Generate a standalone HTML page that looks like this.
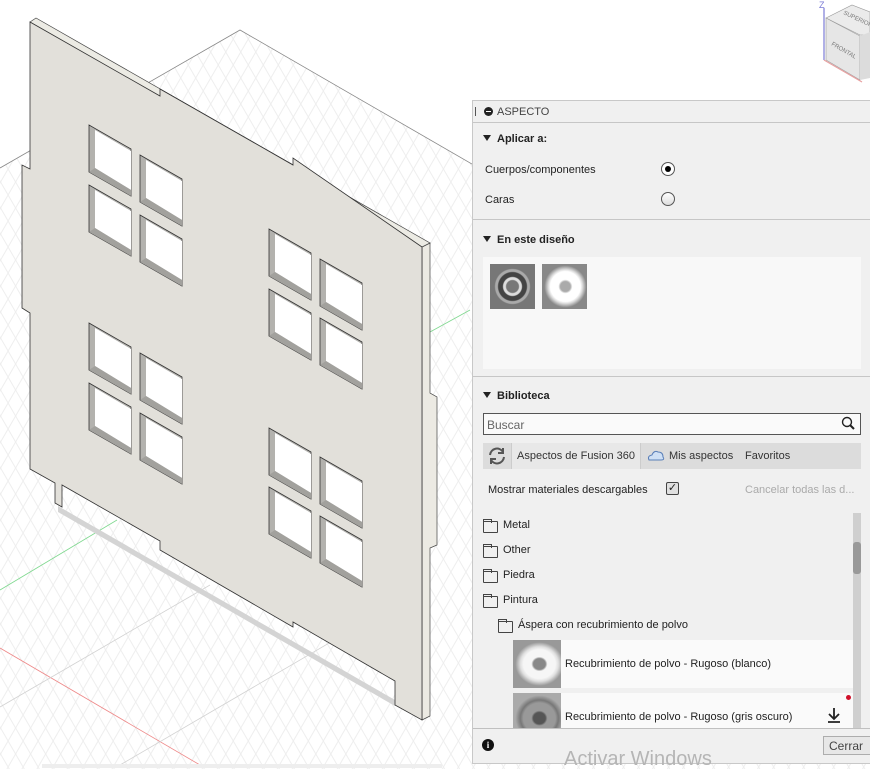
<!DOCTYPE html>
<html><head><meta charset="utf-8"><style>
*{margin:0;padding:0;box-sizing:border-box}
body{width:870px;height:769px;overflow:hidden;background:#fff;position:relative;font-family:"Liberation Sans",Arial,sans-serif;font-size:11px;color:#222}
.a{position:absolute}
#panel{left:472px;top:100px;width:400px;height:664px;background:#f0f0f0;border:1px solid #c8c8c8}
.hr{position:absolute;left:0;right:0;height:1px;background:#c6c6c6}
.tri{display:inline-block;width:0;height:0;border-left:4px solid transparent;border-right:4px solid transparent;border-top:6px solid #222;margin-right:6px;vertical-align:1px}
.b{font-weight:bold;font-size:11px}
.fold{position:absolute;width:15px;height:12px;border:1px solid #444;border-radius:1px}
.fold:before{content:"";position:absolute;left:-1px;top:-3px;width:7px;height:3px;border:1px solid #444;border-bottom:none}
</style></head><body>
<svg class="a" style="left:0;top:0" width="870" height="769">
<defs>
<pattern id="g1" width="13" height="400" patternUnits="userSpaceOnUse" patternTransform="rotate(30)"><rect width="1" height="400" fill="#eeeeee"/></pattern>
<pattern id="g2" width="13" height="400" patternUnits="userSpaceOnUse" patternTransform="rotate(-30)"><rect width="1" height="400" fill="#eeeeee"/></pattern>
<clipPath id="gc"><polygon points="240,30 870,394 870,769 0,769 0,168"/></clipPath>
<g id="w">
<polygon points="0,0 42,24 42,71 0,47" fill="#b3b2ae" stroke="#333" stroke-width="0.8"/>
<polygon points="6,5 42,26 42,65 6,43" fill="#fff"/>
<polygon points="6,43 42,65 42,71 0,47" fill="#a2a19d"/>
</g>
</defs>
<g clip-path="url(#gc)">
<rect width="870" height="769" fill="url(#g1)"/>
<rect width="870" height="769" fill="url(#g2)"/>
</g>
<polyline points="0,168 240,30 870,394" fill="none" stroke="#888" stroke-width="0.8"/>
<line x1="0" y1="590" x2="117" y2="520" stroke="#7fd88f" stroke-width="0.8"/>
<line x1="430" y1="332" x2="470" y2="310" stroke="#7fd88f" stroke-width="0.8"/>
<line x1="0" y1="648" x2="200" y2="765" stroke="#e88" stroke-width="0.8"/>
<line x1="0" y1="707" x2="210" y2="585" stroke="#d2d2d2" stroke-width="0.8"/>
<line x1="120" y1="765" x2="420" y2="590" stroke="#d2d2d2" stroke-width="0.8"/>
<polygon points="58,506 395,700 395,706 58,512" fill="#d4d4d4"/>
<polygon points="422,247 430,243 430,393 437,397 437,545 430,548 430,716 422,720" fill="#eceae3" stroke="#444" stroke-width="0.7"/>
<polygon points="30,22 36,18 430,243 422,247" fill="#ecebe4" stroke="#444" stroke-width="0.7"/>
<polygon points="30,22 160,96 160,89 293,165 293,158 422,247 422,720 395,705 395,681 293,622 293,627 160,550 160,541 62,485 62,507 55,503 55,483 30,469 30,313 22,308 22,165 30,169" fill="#e2e0da" stroke="#333" stroke-width="0.8"/>
<use href="#w" x="89" y="125"/><use href="#w" x="140" y="155"/><use href="#w" x="89" y="185"/><use href="#w" x="140" y="215"/>
<use href="#w" x="269" y="229"/><use href="#w" x="320" y="259"/><use href="#w" x="269" y="289"/><use href="#w" x="320" y="318"/>
<use href="#w" x="89" y="323"/><use href="#w" x="140" y="353"/><use href="#w" x="89" y="383"/><use href="#w" x="140" y="413"/>
<use href="#w" x="269" y="428"/><use href="#w" x="320" y="457"/><use href="#w" x="269" y="487"/><use href="#w" x="320" y="516"/>
<polygon points="826,18 852,5 870,12 870,35 860,35" fill="#ebebeb" stroke="#999" stroke-width="0.6"/>
<polygon points="826,18 860,36 860,80 826,60" fill="#e6e6e6" stroke="#999" stroke-width="0.6"/>
<polygon points="860,36 870,32 870,78 860,80" fill="#dcdcdc"/>
<line x1="824" y1="8" x2="824" y2="60" stroke="#7b7bd6" stroke-width="1.2"/>
<line x1="824" y1="60" x2="862" y2="82" stroke="#e8a0a0" stroke-width="1.2"/>
<text x="831" y="45" font-size="6" fill="#777" font-family="Liberation Sans" transform="rotate(30 831 45)">FRONTAL</text>
<text x="843" y="14" font-size="6" fill="#777" font-family="Liberation Sans" transform="rotate(25 843 14)">SUPERIOR</text>
<text x="819" y="8" font-size="9" fill="#7b7bd6" font-family="Liberation Sans">Z</text>
<rect x="42" y="764" width="400" height="4" fill="#eee"/>
</svg>

<div id="panel" class="a">
 <div class="a" style="left:2px;top:6px;width:1px;height:9px;background:#555"></div>
 <div class="a" style="left:11px;top:6px;width:9px;height:9px;border-radius:50%;background:#222"><div style="position:absolute;left:2px;top:4px;width:5px;height:1px;background:#fff"></div></div>
 <div class="a" style="left:24px;top:5px;color:#444;font-size:11px">ASPECTO</div>
 <div class="hr" style="top:21px"></div>
 <div class="a b" style="left:10px;top:32px"><span class="tri"></span>Aplicar a:</div>
 <div class="a" style="left:12px;top:63px">Cuerpos/componentes</div>
 <div class="a" style="left:188px;top:61px;width:14px;height:14px;border-radius:50%;border:1px solid #555;background:#fff"><div style="position:absolute;left:3px;top:3px;width:6px;height:6px;border-radius:50%;background:#000"></div></div>
 <div class="a" style="left:12px;top:93px">Caras</div>
 <div class="a" style="left:188px;top:91px;width:14px;height:14px;border-radius:50%;border:1px solid #555;background:linear-gradient(#fff,#ddd)"></div>
 <div class="hr" style="top:118px"></div>
 <div class="a b" style="left:10px;top:133px"><span class="tri"></span>En este diseño</div>
 <div class="a" style="left:10px;top:156px;width:378px;height:112px;background:#f8f8f8"></div>
 <div class="a" style="left:17px;top:163px;width:45px;height:45px;background:radial-gradient(circle at 50% 50%,#777 0 6px,#ddd 7px 9px,#444 10px 14px,#aaa 15px 17px,#777 18px)"></div>
 <div class="a" style="left:69px;top:163px;width:45px;height:45px;background:radial-gradient(circle at 52% 50%,#aaa 0 5px,#fff 7px 15px,#ddd 17px,#888 21px)"></div>
 <div class="hr" style="top:275px"></div>
 <div class="a b" style="left:10px;top:289px"><span class="tri"></span>Biblioteca</div>
 <div class="a" style="left:10px;top:312px;width:378px;height:22px;border:1px solid #555;background:#fafafa;color:#666;font-size:12px;padding:4px 3px">Buscar</div>
 <svg class="a" style="left:367px;top:315px" width="16" height="16"><circle cx="7" cy="6" r="4.5" fill="none" stroke="#222" stroke-width="1.4"/><line x1="10" y1="9" x2="14" y2="13" stroke="#222" stroke-width="2"/></svg>
 <div class="a" style="left:10px;top:342px;width:378px;height:26px;background:#dcdcdc"></div>
 <div class="a" style="left:38px;top:342px;width:130px;height:26px;background:#e8e8e8;border-left:1px solid #ccc;border-right:1px solid #ccc"></div>
 <svg class="a" style="left:14px;top:346px" width="20" height="18"><path d="M3,8 A7,7 0 0 1 16,5 M16,1 L16,6 L11,6" fill="none" stroke="#555" stroke-width="2"/><path d="M17,10 A7,7 0 0 1 4,13 M4,17 L4,12 L9,12" fill="none" stroke="#555" stroke-width="2"/></svg>
 <div class="a" style="left:44px;top:349px;font-size:11px;color:#333">Aspectos de Fusion 360</div>
 <svg class="a" style="left:174px;top:348px" width="18" height="13"><path d="M2,11 Q0,7 5,6 Q7,1 11,3 Q16,3 16,8 Q18,11 14,11 Z" fill="#cfe0f5" stroke="#5a7fb8" stroke-width="1"/></svg>
 <div class="a" style="left:196px;top:349px;font-size:11px;color:#333">Mis aspectos</div>
 <div class="a" style="left:272px;top:349px;font-size:11px;color:#333">Favoritos</div>
 <div class="a" style="left:15px;top:383px;font-size:11px">Mostrar materiales descargables</div>
 <div class="a" style="left:193px;top:381px;width:13px;height:13px;border:1px solid #444;border-radius:2px;background:#e0e0e0;font-size:11px;line-height:11px;text-align:center">✓</div>
 <div class="a" style="left:272px;top:383px;font-size:11px;color:#aaa">Cancelar todas las d...</div>
 <div class="a" style="left:380px;top:412px;width:8px;height:215px;background:#cfcfcf"></div>
 <div class="a" style="left:380px;top:441px;width:8px;height:32px;background:#999;border-radius:3px"></div>
 <div class="fold" style="left:10px;top:420px"></div><div class="a" style="left:30px;top:418px">Metal</div>
 <div class="fold" style="left:10px;top:445px"></div><div class="a" style="left:30px;top:443px">Other</div>
 <div class="fold" style="left:10px;top:470px"></div><div class="a" style="left:30px;top:468px">Piedra</div>
 <div class="fold" style="left:10px;top:495px"></div><div class="a" style="left:30px;top:493px">Pintura</div>
 <div class="fold" style="left:25px;top:520px"></div><div class="a" style="left:45px;top:518px">Áspera con recubrimiento de polvo</div>
 <div class="a" style="left:40px;top:539px;width:340px;height:48px;background:#fafafa"></div>
 <div class="a" style="left:40px;top:539px;width:48px;height:48px;background:radial-gradient(ellipse at 55% 50%,#888 0 6px,#f6f6f6 8px 16px,#e0e0e0 19px,#999 24px)"></div>
 <div class="a" style="left:92px;top:557px">Recubrimiento de polvo - Rugoso (blanco)</div>
 <div class="a" style="left:40px;top:592px;width:340px;height:36px;background:#fafafa"></div>
 <div class="a" style="left:40px;top:592px;width:48px;height:36px;background:radial-gradient(ellipse at 55% 70%,#555 0 6px,#999 8px 16px,#777 19px,#aaa 24px)"></div>
 <div class="a" style="left:92px;top:610px">Recubrimiento de polvo - Rugoso (gris oscuro)</div>
 <div class="a" style="left:373px;top:594px;width:5px;height:5px;border-radius:50%;background:#d0102a"></div>
 <svg class="a" style="left:353px;top:606px" width="16" height="17"><path d="M8,1 V12 M3,7 L8,12 L13,7 M2,15 H14" fill="none" stroke="#222" stroke-width="1.8"/></svg>
 <div class="hr" style="top:627px;background:#c0c0c0"></div>
 <div class="a" style="left:9px;top:638px;width:12px;height:12px;border-radius:50%;background:#111;color:#fff;font-size:9px;font-weight:bold;text-align:center;line-height:12px;font-family:'Liberation Serif',serif">i</div>
 <div class="a" style="left:350px;top:635px;width:52px;height:19px;border:1px solid #adadad;background:#e7e7e7;font-size:12px;color:#444;padding:2px 0 0 5px">Cerrar</div>
</div>
<div class="a" style="left:564px;top:748px;font-size:20px;color:#b5b5b5">Activar Windows</div>
</body></html>
